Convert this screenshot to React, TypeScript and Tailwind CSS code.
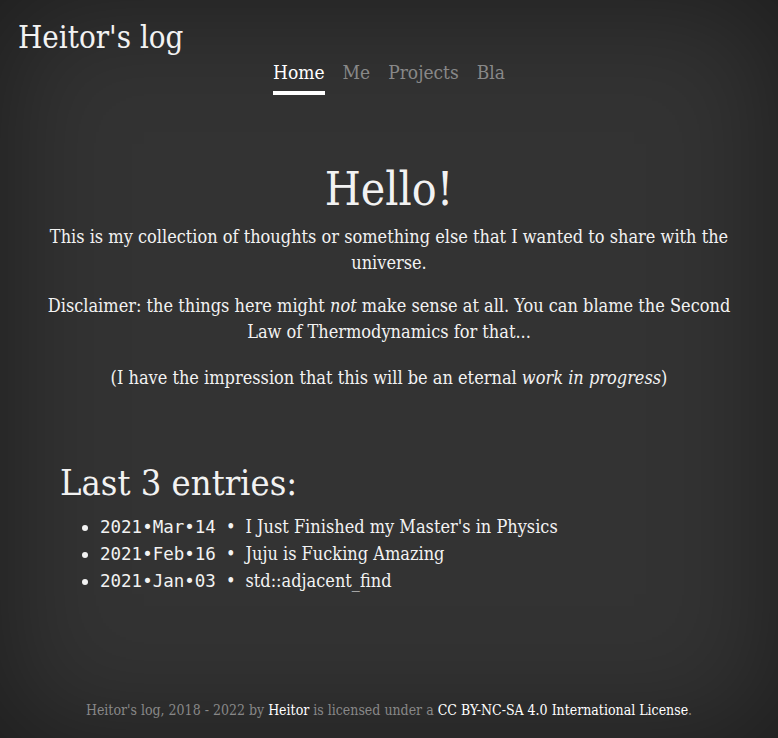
import React from "react";

const serif = "font-['DejaVu_Serif',serif] [font-stretch:condensed]";

const entries = [
  { date: "2021•Mar•14", title: "I Just Finished my Master's in Physics" },
  { date: "2021•Feb•16", title: "Juju is Fucking Amazing" },
  { date: "2021•Jan•03", title: "std::adjacent_find" },
];

export default function App() {
  return (
    <div
      className={`min-h-[738px] bg-[#333333] shadow-[inset_0_0_120px_rgba(0,0,0,0.45)] text-[#f2f2f2] flex flex-col ${serif}`}
    >
      <header className="px-[18px] pt-[18px]">
        <div className="text-[31px] leading-[38px]">Heitor's log</div>
        <nav className="flex justify-center gap-[18px] text-[19px] leading-[26px] mt-[3px]">
          <a className="pb-[6px] border-b-4 border-white text-white">Home</a>
          <a className="text-[#888888]">Me</a>
          <a className="text-[#888888]">Projects</a>
          <a className="text-[#888888]">Bla</a>
        </nav>
      </header>

      <main className="flex-1 px-[40px]">
        <section className="text-center mt-[68px]">
          <h1 className="text-[46px] leading-[52px]">Hello!</h1>
          <p className="text-[18px] leading-[26px] mt-[9px]">
            This is my collection of thoughts or something else that I wanted to share with the universe.
          </p>
          <p className="text-[18px] leading-[26px] mt-[17px]">
            Disclaimer: the things here might <em>not</em> make sense at all. You can blame the Second Law of
            Thermodynamics for that...
          </p>
          <p className="text-[18px] leading-[26px] mt-[20px]">
            (I have the impression that this will be an eternal <em>work in progress</em>)
          </p>
        </section>

        <section className="mt-[70px] pl-[20px]">
          <h2 className="text-[36px] leading-[44px]">Last 3 entries:</h2>
          <ul className="list-disc pl-[40px] mt-[8px] text-[18px] leading-[27px]">
            {entries.map((e) => (
              <li key={e.date} className="h-[27px]">
                <span className="font-['DejaVu_Sans_Mono',monospace] text-[17.5px] leading-none font-light">
                  {e.date}
                </span>
                <span className="px-[10px]">•</span>
                <a>{e.title}</a>
              </li>
            ))}
          </ul>
        </section>
      </main>

      <footer className="text-center text-[14px] leading-[20px] text-[#888888] pb-[18px]">
        Heitor's log, 2018 - 2022 by <a className="text-white">Heitor</a> is licensed under a{" "}
        <a className="text-white">CC BY-NC-SA 4.0 International License</a>.
      </footer>
    </div>
  );
}
